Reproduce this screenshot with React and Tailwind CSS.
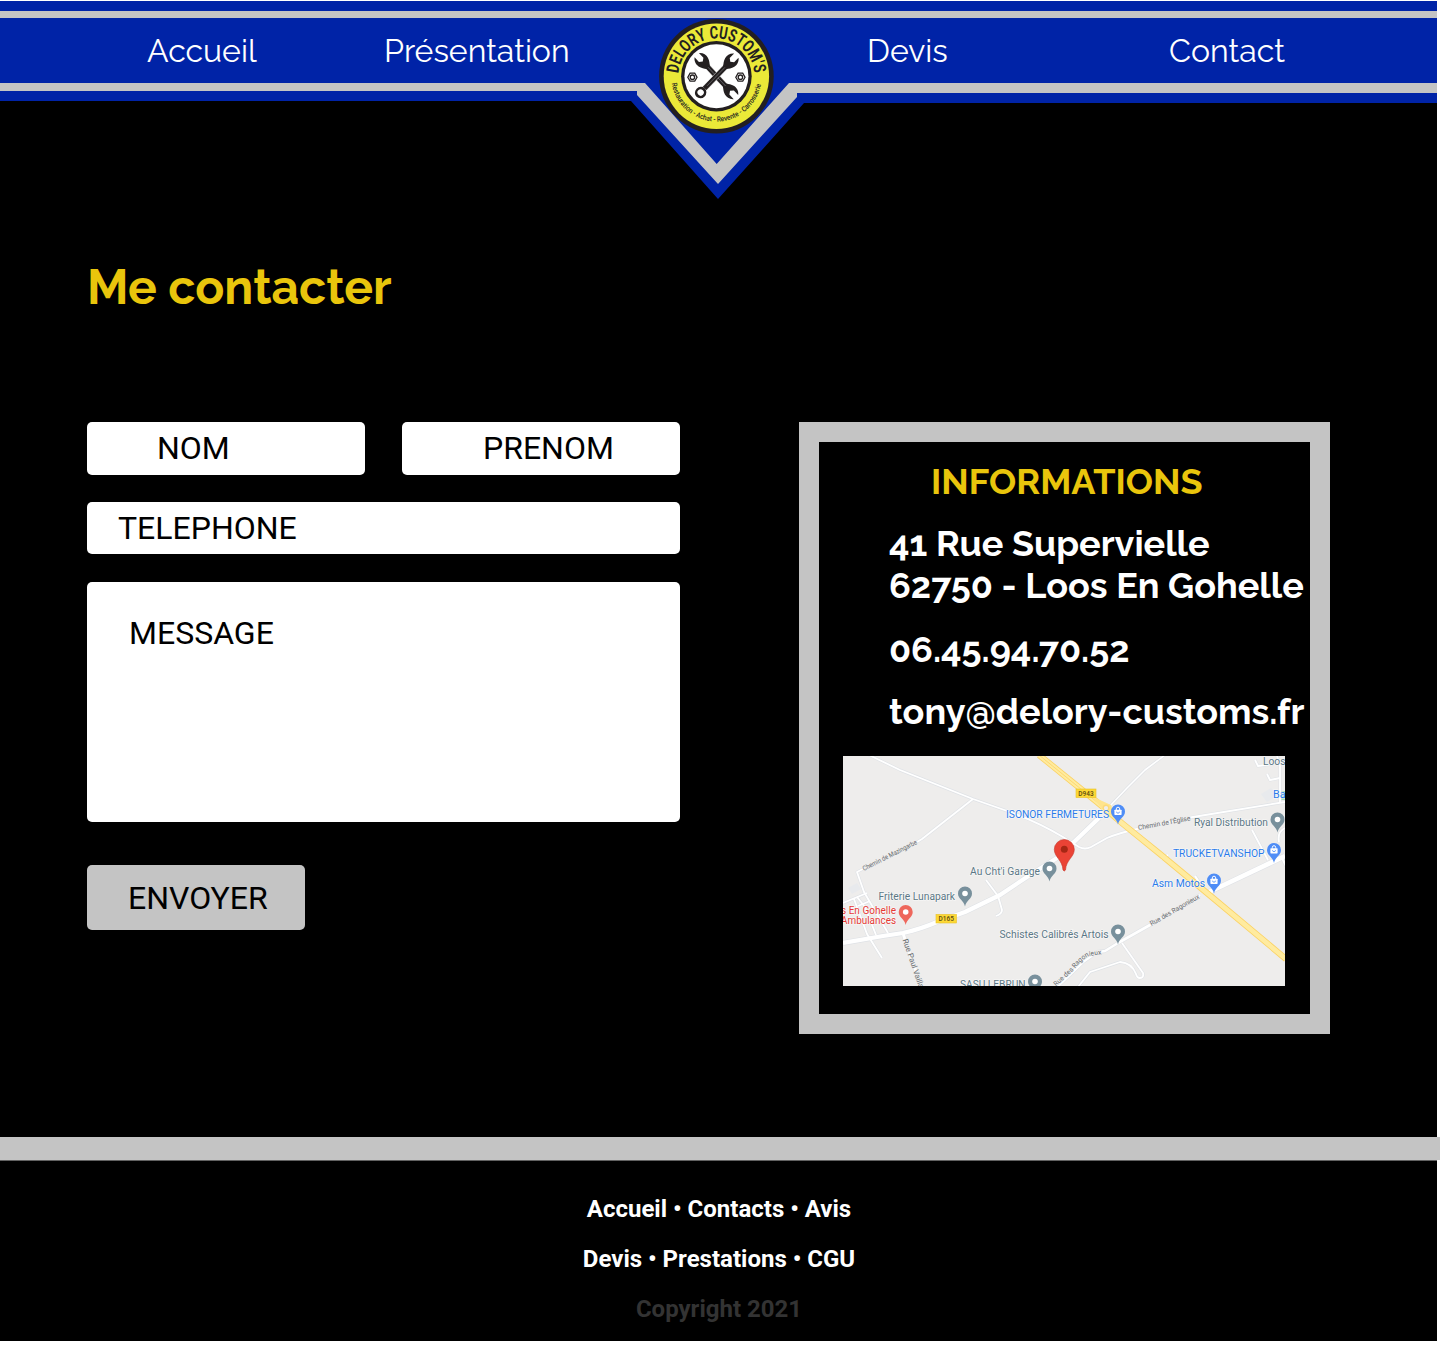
import React from "react";

const HEAD =
  "M-3 -23.5 L-3 -18.3 L0 -16.4 L3 -18.3 L3 -23.5 C6 -21.6 7 -18.4 6.2 -15.8 C5.4 -13 3.4 -11.5 2.4 -10 L-2.4 -10 C-3.4 -11.5 -5.4 -13 -6.2 -15.8 C-7 -18.4 -6 -21.6 -3 -23.5 Z";

function Wrench({ ring }) {
  return (
    <g transform="scale(1.02 1.22)">
      <path d="M-2.6 -13 L2.6 -13 L2.6 14 L-2.6 14 Z" fill="#231f20" stroke="#fff" strokeWidth=".4" />
      <path d={HEAD} fill="#231f20" />
      {ring ? (
        <ellipse cx="0" cy="18.6" rx="4.3" ry="3.7" fill="#fff" stroke="#231f20" strokeWidth="2.3" />
      ) : (
        <path transform="rotate(180)" d={HEAD} fill="#231f20" />
      )}
      <path d="M0 -10 L0 11" stroke="#77757a" strokeWidth=".6" />
    </g>
  );
}

function Nut({ x }) {
  return (
    <g transform={`translate(${x} 1)`} fill="none" stroke="#231f20">
      <path d="M-4.6 0 L-2.3 -4 L2.3 -4 L4.6 0 L2.3 4 L-2.3 4 Z" strokeWidth="1.3" />
      <circle r="2.2" strokeWidth="1.3" />
    </g>
  );
}

function Emblem() {
  return (
    <svg className="block overflow-visible" width="200" height="205" viewBox="620 0 200 205">
      <path d="M631 101 L637 91 L637 83 L797 83 L797 93 L804 103 L718 199 Z" fill="#0023a7" />
      <path d="M637 83 L645 83 L716.7 164 L789 83 L797 83 L797 97 L718 184 L637 95 Z" fill="#c4c4c4" />
      <g transform="translate(716.4 76.2)">
        <circle r="57.3" fill="#231f20" />
        <circle r="52.7" fill="#ebe938" />
        <circle r="35.3" fill="#231f20" />
        <circle r="32" fill="#fff" />
        <path id="arc-top" d="M-37.8 -2.6 A37.9 37.9 0 0 1 37.8 -2.6" fill="none" />
        <path id="arc-bottom" d="M-44.6 7 A45.1 45.1 0 0 0 44.6 7" fill="none" />
        <text fontFamily="Roboto, sans-serif" fontWeight="700" fontSize="17.5" fill="#231f20">
          <textPath href="#arc-top" textLength="113" lengthAdjust="spacingAndGlyphs">DELORY CUSTOM'S</textPath>
        </text>
        <text fontFamily="Roboto, sans-serif" fontWeight="500" fontSize="7.3" fill="#231f20">
          <textPath href="#arc-bottom" textLength="127" lengthAdjust="spacingAndGlyphs">Restauration - Achat - Revente - Carrosserie</textPath>
        </text>
        <g transform="rotate(-43)"><Wrench /></g>
        <g transform="rotate(44)"><Wrench ring /></g>
        <Nut x={-24} />
        <Nut x={24} />
      </g>
    </svg>
  );
}

function Header() {
  return (
    <header className="relative h-[102px] w-[1437px]">
      <div className="h-[10px] bg-[#0023a7]" />
      <div className="h-[7px] bg-[#c4c4c4]" />
      <div className="h-[65px] bg-[#0023a7]" />
      <div className="flex items-start">
        <div className="w-[637px]">
          <div className="h-2 bg-[#c4c4c4]" />
          <div className="h-[10px] bg-[#0023a7]" />
        </div>
        <div className="w-[160px]" />
        <div className="flex-1">
          <div className="h-[10px] bg-[#c4c4c4]" />
          <div className="h-[10px] bg-[#0023a7]" />
        </div>
      </div>
      <div className="absolute left-[620px] -top-px">
        <Emblem />
      </div>
      <nav className="absolute left-0 top-[31px] flex pl-[147px] font-['Raleway',Lato,sans-serif] text-[32px] leading-[38px] whitespace-nowrap text-white">
        <a className="w-[237px]">Accueil</a>
        <a className="w-[483px]">Présentation</a>
        <a className="w-[302px]">Devis</a>
        <a>Contact</a>
      </nav>
    </header>
  );
}

function Pin({ x, y, color, shop }) {
  return (
    <g transform={`translate(${x} ${y})`}>
      <path d="M0 13 C-1 7 -7 5.5 -7 0 A7 7 0 0 1 7 0 C7 5.5 1 7 0 13 Z" fill={color} />
      {shop ? (
        <g>
          <rect x="-3.6" y="-1.8" width="7.2" height="5.2" rx=".6" fill="#fff" />
          <path d="M-1.7 -1.5 V-2.6 A1.7 1.7 0 0 1 1.7 -2.6 V-1.5" stroke="#fff" strokeWidth="1" fill="none" />
          <path d="M-1.5 .2 A1.5 1.5 0 0 0 1.5 .2" stroke={color} strokeWidth=".8" fill="none" />
        </g>
      ) : (
        <circle r="2.8" fill="#fff" />
      )}
    </g>
  );
}

const ROADS = [
  ["M26 -1 L57 14 L130 43 L167 56 Q195 66 220 81 L236 91 Q242 94 248 91 L264 82 Q276 77 294 73 L350 61 L442 46", 1.8],
  ["M130 43 L79 83 L74 86 M20 113 L14 116 L21 136 L45 177", 1.8],
  ["M0 147 L24 137 M14 141 L22 151 L33 179 M11 143 L24 178 L39 202 M15 150 L27 145", 1.8],
  ["M267 50 L284 32 L302 14 L322 -1", 1.6],
  ["M143 124 L155 140 L159 154 Q159 158 153 160", 1.8],
  ["M60 177 L64 190 L79 232", 3],
  ["M357 139 L307 169 L275 187 L262 195 L254 196 L240 206 L215 230", 2.6],
  ["M279 187 L300 217 Q301 222 297 222 Q294 222 293 218 Q289 207 277 206 L247 216 L235 231", 1.8],
  ["M412 4 L415 10 L430 8 M434 0 L437 10 L437 46 M424 18 L427 24 L437 22", 1.8],
  ["M409 74 L425 104 M442 72 Q434 76 436 86", 1.8],
  ["M318 103 L325 99 M352 120 L361 134 M438 100 L443 110", 2.2],
  ["M0 187 L40 180 L60 177 Q78 173 94 166 L122 156 L157 139 L190 117 L214 102 L231 86 L256 62", 4.2],
  ["M364 137 L442 100", 4.6],
];

const LABELS = [
  ["ISONOR FERMETURES", 163, 62, 103, "#2a7bea"],
  ["Ryal Distribution", 351, 70.3, 74, "#5b7785"],
  ["TRUCKETVANSHOP", 330, 101, 91.5, "#2a7bea"],
  ["Au Cht'i Garage", 127, 119.3, 70, "#5b7785"],
  ["Friterie Lunapark", 35.5, 144.3, 76.5, "#5b7785"],
  ["s En Gohelle", -2, 157.5, 55, "#e53935"],
  ["Ambulances", -2, 168, 55, "#e53935"],
  ["Schistes Calibrés Artois", 156.5, 182.3, 109, "#5b7785"],
  ["Asm Motos", 309, 131.3, 53, "#2a7bea"],
  ["SASU LEBRUN", 117, 232, 65.5, "#5b7785"],
  ["Loos", 420, 8.6, 22.5, "#5b7785"],
  ["Ba", 430, 41.8, 12.5, "#2a7bea"],
];

const YELLOW = "M196 -1 L254 46 L280 68 L317 98 L364 137 L443 203";

function Map() {
  return (
    <svg className="block" width="442" height="230" viewBox="0 0 442 230" fontFamily="Roboto, sans-serif">
      <rect width="442" height="230" fill="#eeedec" />
      <path d="M418 38 l10 -6 l6 8 l-10 6 Z" fill="#e8eaed" />
      <path d="M5 132 l9 -5 l4 6 l-9 5 Z" fill="#e8eaed" />
      <rect x="438" y="35" width="4" height="9" fill="#a8dab5" />
      {ROADS.map(([d, w]) => (
        <path key={d} d={d} fill="none" stroke="#dfe2e6" strokeWidth={w + 1.2} strokeLinejoin="round" />
      ))}
      {ROADS.map(([d, w]) => (
        <path key={d} d={d} fill="none" stroke="#fff" strokeWidth={w} strokeLinejoin="round" />
      ))}
      <path d={YELLOW} fill="none" stroke="#fbd365" strokeWidth="6.2" />
      <path d={YELLOW} fill="none" stroke="#ffeb9f" strokeWidth="4.6" />
      <path d="M196 -1 L254 46" fill="none" stroke="#fbd365" strokeWidth=".8" />
      <path d="M248 40 L268 49 L272 61 L262 56 Z" fill="#ffe48c" />
      <circle cx="263" cy="52" r="2.8" fill="#eeedec" stroke="#fbd97a" strokeWidth="1.4" />
      <g fontSize="6.5" fontWeight="500" textAnchor="middle" fill="#5b4a10">
        <rect x="233" y="33" width="20" height="8.6" fill="#fdd835" stroke="#e8c22a" strokeWidth=".6" />
        <text x="243" y="39.7">D943</text>
        <rect x="93" y="158.4" width="20.5" height="8.6" fill="#fdd835" stroke="#e8c22a" strokeWidth=".6" />
        <text x="103.2" y="165.1">D165</text>
      </g>
      <g fontSize="6.8" fill="#666b6f" stroke="#eeedec" strokeWidth="1.4" paintOrder="stroke">
        <text transform="translate(21 115) rotate(-27)" textLength="60" lengthAdjust="spacingAndGlyphs">Chemin de Mazingarbe</text>
        <text transform="translate(295.5 74) rotate(-10.5)" textLength="53" lengthAdjust="spacingAndGlyphs">Chemin de l'Église</text>
        <text transform="translate(308.5 170) rotate(-30)" textLength="56" lengthAdjust="spacingAndGlyphs">Rue des Ragonieux</text>
        <path id="rue-ragonieux" d="M213 230.5 L230 215 Q238 204 246 200 L262 198" fill="none" stroke="none" />
        <text><textPath href="#rue-ragonieux">Rue des Ragonieux</textPath></text>
        <text fontSize="7.8" transform="translate(59.5 184) rotate(71)">Rue Paul Vaillant</text>
      </g>
      <g fontSize="10" stroke="#fff" strokeWidth="1.2" strokeOpacity=".7" paintOrder="stroke">
        {LABELS.map(([t, x, y, w, c]) => (
          <text key={t} x={x} y={y} fill={c} textLength={w} lengthAdjust="spacingAndGlyphs">{t}</text>
        ))}
      </g>
      <Pin x={275} y={55.5} color="#4f8df6" shop />
      <Pin x={431} y={94} color="#4f8df6" shop />
      <Pin x={371} y={124.5} color="#4f8df6" shop />
      <Pin x={434.5} y={63.5} color="#78909c" />
      <Pin x={206.5} y={112.5} color="#78909c" />
      <Pin x={122} y={137.5} color="#78909c" />
      <Pin x={275} y={175.5} color="#78909c" />
      <Pin x={192} y={225.5} color="#78909c" />
      <Pin x={62.7} y={156} color="#ee675c" />
      <path d="M220 114 C219.5 104 211.3 101 211.3 93.5 A10 10 0 0 1 231.3 93.5 C231.3 101 223 104 222.5 114 Q221.3 116 220 114 Z" fill="#ea4335" stroke="#c5352b" strokeWidth=".6" />
      <circle cx="221.3" cy="93.3" r="3.5" fill="#a52714" />
    </svg>
  );
}

function ContactForm() {
  return (
    <form className="w-[593px] text-[32px] leading-[38px] text-black">
      <div className="flex justify-between">
        <label className="block h-[53px] w-[278px] rounded-[5px] bg-white pl-[70px] pt-[7px]">NOM</label>
        <label className="block h-[53px] w-[278px] rounded-[5px] bg-white pl-[81px] pt-[7px]">PRENOM</label>
      </div>
      <label className="mt-[27px] block h-[52px] rounded-[5px] bg-white pl-[31px] pt-[7px]">TELEPHONE</label>
      <label className="mt-7 block h-[240px] rounded-[5px] bg-white pl-[42px] pt-8">MESSAGE</label>
      <button type="button" className="mt-[43px] block h-[65px] w-[218px] rounded-[5px] bg-[#c4c4c4] pl-[41px] pt-px text-left">
        ENVOYER
      </button>
    </form>
  );
}

function Informations() {
  return (
    <section className="h-[612px] w-[531px] border-[20px] border-[#c4c4c4] pt-[18px] font-['Raleway',Lato,sans-serif] text-4xl leading-[42px] font-bold whitespace-nowrap text-white">
      <h2 className="pl-[112px] text-[#e9c50c]">INFORMATIONS</h2>
      <div className="flex flex-col pl-[70px] pt-5">
        <p>41 Rue Supervielle</p>
        <p>62750 - Loos En Gohelle</p>
        <p className="mt-[22px]">06.45.94.70.52</p>
        <p className="mt-5">tony@delory-customs.fr</p>
      </div>
      <div className="pl-6 pt-6 font-normal">
        <Map />
      </div>
    </section>
  );
}

export default function App() {
  return (
    <div className="h-[1348px] w-[1440px] overflow-hidden bg-white pt-px font-['Roboto',sans-serif]">
      <div className="h-[1136px] w-[1437px] bg-black">
        <Header />
        <main>
          <h1 className="pl-[87px] pt-[156px] font-['Raleway',Lato,sans-serif] text-5xl leading-[56px] font-bold text-[#e9c50c]">
            Me contacter
          </h1>
          <div className="mt-[107px] flex gap-[119px] pl-[87px]">
            <ContactForm />
            <Informations />
          </div>
        </main>
      </div>
      <div className="h-[23px] w-[1440px] bg-[#c4c4c4]" />
      <div className="h-px w-[1437px] bg-[#626262]" />
      <footer className="flex h-[180px] w-[1437px] flex-col items-center gap-[22px] bg-black pt-[34px] pl-px text-2xl leading-7 font-bold text-white">
        <p>Accueil • Contacts • Avis</p>
        <p>Devis • Prestations • CGU</p>
        <p className="text-[#333333]">Copyright 2021</p>
      </footer>
    </div>
  );
}
